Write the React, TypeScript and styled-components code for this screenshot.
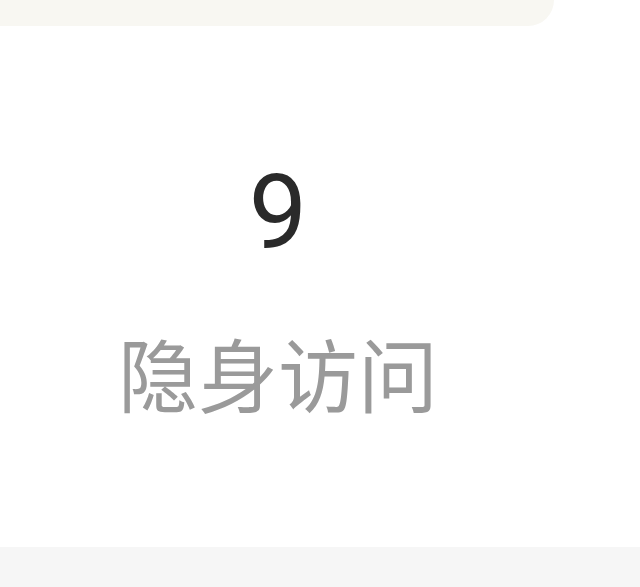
import React from 'react';
import styled, { createGlobalStyle } from 'styled-components';

const GlobalStyle = createGlobalStyle`
  html, body {
    margin: 0;
    padding: 0;
    background: #ffffff;
    overflow: hidden;
  }
  body {
    font-family: Roboto, "Noto Sans CJK SC", sans-serif;
  }
`;

const Page = styled.div`
  width: 640px;
  height: 587px;
  display: flex;
  flex-direction: column;
  background: #ffffff;
  overflow: hidden;
`;

const TopCard = styled.div`
  width: 554px;
  height: 26px;
  background: #f8f7f2;
  border-bottom-right-radius: 32px;
  flex-shrink: 0;
`;

const StatsRow = styled.div`
  flex: 1;
  display: grid;
  grid-template-columns: 556px 556px;
`;

const StatCell = styled.div`
  display: flex;
  flex-direction: column;
  align-items: center;
  padding-top: 127px;
`;

const Value = styled.div`
  font-family: Roboto, "Noto Sans", sans-serif;
  font-size: 104px;
  line-height: 120px;
  color: #2a2a2a;
`;

const Label = styled.div`
  margin-top: 53px;
  font-family: "Noto Sans CJK SC", sans-serif;
  font-size: 80px;
  line-height: 90px;
  color: #9a9a9a;
`;

const Footer = styled.div`
  height: 40px;
  background: #f6f6f6;
  flex-shrink: 0;
`;

const stats = [{ value: '9', label: '隐身访问' }];

const App = () => {
  return (
    <>
      <GlobalStyle />
      <Page>
        <TopCard />
        <StatsRow>
          {stats.map((s) => (
            <StatCell key={s.label}>
              <Value>{s.value}</Value>
              <Label>{s.label}</Label>
            </StatCell>
          ))}
        </StatsRow>
        <Footer />
      </Page>
    </>
  );
};

export default App;
